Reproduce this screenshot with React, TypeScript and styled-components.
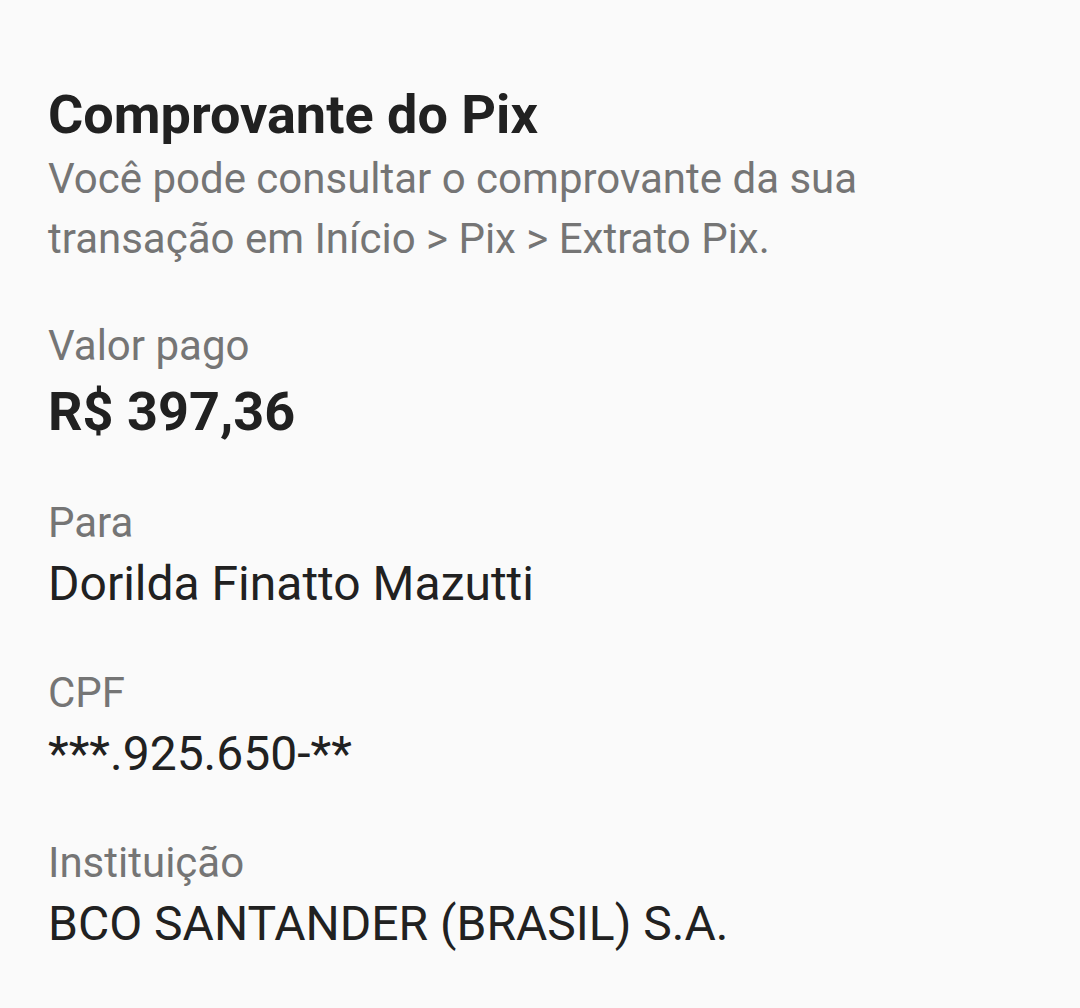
import React from "react";
import styled, { createGlobalStyle } from "styled-components";

const Global = createGlobalStyle`
  html, body { margin: 0; padding: 0; background: #fafafa; }
  body { font-family: Roboto, "Noto Sans", Arial, sans-serif; -webkit-font-smoothing: antialiased; }
`;

const Page = styled.main`
  width: 1080px;
  height: 1008px;
  box-sizing: border-box;
  padding: 81px 48px 0 48px;
  background: #fafafa;
  display: flex;
  flex-direction: column;
`;

const Title = styled.h1`
  margin: 0;
  font-size: 54px;
  line-height: 68px;
  font-weight: 700;
  color: #212121;
`;

const Subtitle = styled.p`
  margin: 0;
  font-size: 42px;
  line-height: 60px;
  color: #757575;
  max-width: 830px;
`;

const Fields = styled.dl`
  margin: 47px 0 0 0;
  display: flex;
  flex-direction: column;
  gap: 48px;
`;

const Field = styled.div`
  display: flex;
  flex-direction: column;
`;

const Label = styled.dt`
  font-size: 42px;
  line-height: 60px;
  color: #757575;
`;

const Value = styled.dd<{ $strong?: boolean }>`
  margin: 0;
  padding-top: ${(p) => (p.$strong ? "3px" : "0")};
  font-size: ${(p) => (p.$strong ? "54px" : "48px")};
  line-height: ${(p) => (p.$strong ? "66px" : "62px")};
  font-weight: ${(p) => (p.$strong ? 700 : 400)};
  color: #212121;
`;

const fields = [
  { label: "Valor pago", value: "R$ 397,36", strong: true },
  { label: "Para", value: "Dorilda Finatto Mazutti" },
  { label: "CPF", value: "***.925.650-**" },
  { label: "Instituição", value: "BCO SANTANDER (BRASIL) S.A." },
];

export default function App() {
  return (
    <>
      <Global />
      <Page>
        <Title>Comprovante do Pix</Title>
        <Subtitle>
          Você pode consultar o comprovante da sua transação em Início &gt; Pix &gt; Extrato Pix.
        </Subtitle>
        <Fields>
          {fields.map((f) => (
            <Field key={f.label}>
              <Label>{f.label}</Label>
              <Value $strong={f.strong}>{f.value}</Value>
            </Field>
          ))}
        </Fields>
      </Page>
    </>
  );
}
